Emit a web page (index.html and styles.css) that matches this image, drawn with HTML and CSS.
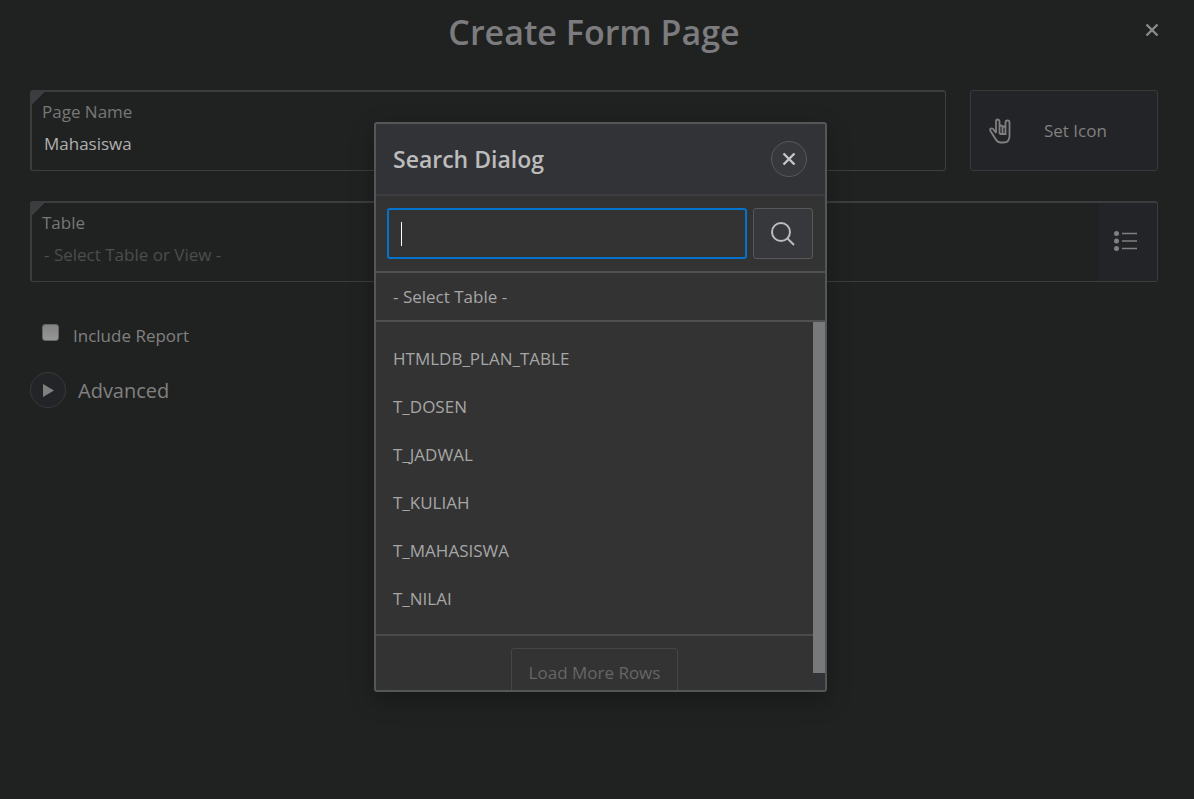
FILE: index.html
```html
<!DOCTYPE html>
<html lang="en">
<head>
<meta charset="utf-8">
<meta name="viewport" content="width=device-width, initial-scale=1">
<title>Create Form Page</title>
<link rel="stylesheet" href="styles.css">
</head>
<body>
<main class="page">
  <header class="page-header">
    <h1 class="page-title">Create Form Page</h1>
    <button class="page-close" type="button" aria-label="Close">
      <svg width="16" height="16" viewBox="0 0 16 16"><path d="M2.500 2.500 13.500 13.500M13.500 2.500 2.500 13.500"/></svg>
    </button>
  </header>
  <form class="form">
    <div class="form-row">
      <div class="field required">
        <label class="field-label" for="page-name">Page Name</label>
        <input class="field-input strong" id="page-name" type="text" value="Mahasiswa">
      </div>
      <button class="set-icon" type="button">
        <svg width="22" height="26" viewBox="0 0 22 26"><path d="M7 15V3Q7 1.500 8.500 1.500T10.500 3V8M10.500 16V9Q10.500 7.500 12 7.500T13.500 9V16M13.500 16V10Q13.500 8.500 15 8.500T16.500 10V16M10.500 16H16.500V4.500Q16.500 2.500 18.500 2.500T20.500 4.500V18Q20.500 24.500 14.500 24.500H12Q8.500 24.500 6.500 21L1.500 13Q.5 11 2 10.500T5 12L7 15"/></svg>
        <span class="set-icon-text">Set Icon</span>
      </button>
    </div>
    <div class="field with-button required">
      <div class="field-body">
        <label class="field-label" for="table-name">Table</label>
        <input class="field-input" id="table-name" type="text" placeholder="- Select Table or View -">
      </div>
      <button class="list-button" type="button" aria-label="Choose table">
        <svg width="24" height="20" viewBox="0 0 24 20"><g class="dots"><circle cx="2.500" cy="2.500" r="2.500"/><circle cx="2.500" cy="10" r="2.500"/><circle cx="2.500" cy="17.500" r="2.500"/></g><path d="M8 2.500H23M8 10H23M8 17.500H23"/></svg>
      </button>
    </div>
    <div class="check-row">
      <input class="check" id="include-report" type="checkbox">
      <label class="check-label" for="include-report">Include Report</label>
    </div>
    <button class="advanced" type="button">
      <span class="advanced-icon"><svg width="11" height="13" viewBox="0 0 11 13"><path d="M0 0 11 6.500 0 13Z"/></svg></span>
      <span class="advanced-text">Advanced</span>
    </button>
  </form>
</main>
<div class="overlay">
  <section class="dialog" role="dialog" aria-labelledby="dialog-title">
    <header class="dialog-header">
      <h2 class="dialog-title" id="dialog-title">Search Dialog</h2>
      <button class="dialog-close" type="button" aria-label="Close dialog">
        <svg width="16" height="16" viewBox="0 0 16 16"><path d="M2.500 2.500 13.500 13.500M13.500 2.500 2.500 13.500"/></svg>
      </button>
    </header>
    <div class="search">
      <div class="search-box">
        <input class="search-input" type="text" aria-label="Search">
        <span class="caret"></span>
      </div>
      <button class="search-button" type="button" aria-label="Search">
        <svg width="24" height="24" viewBox="0 0 24 24"><circle cx="10" cy="10" r="9"/><path d="M16.500 16.500 23 23"/></svg>
      </button>
    </div>
    <button class="select-none" type="button">- Select Table -</button>
    <div class="results">
      <div class="results-body">
        <ul class="options">
          <li><button class="option" type="button">HTMLDB_PLAN_TABLE</button></li>
          <li><button class="option" type="button">T_DOSEN</button></li>
          <li><button class="option" type="button">T_JADWAL</button></li>
          <li><button class="option" type="button">T_KULIAH</button></li>
          <li><button class="option" type="button">T_MAHASISWA</button></li>
          <li><button class="option" type="button">T_NILAI</button></li>
        </ul>
        <div class="more"><button class="more-button" type="button" disabled>Load More Rows</button></div>
      </div>
      <div class="scrollbar"><div class="thumb"></div></div>
    </div>
  </section>
</div>
</body>
</html>
```
FILE: styles.css
```css
* { box-sizing: border-box; }
body {
  margin: 0;
  min-height: 100vh;
  background: #202221;
  color: #808080;
  font: 17px/24px "Open Sans", "Noto Sans", sans-serif;
}
button, input { font: inherit; color: inherit; margin: 0; }
button { cursor: pointer; padding: 0; border: 0; background: none; }
input { outline: 0; }
svg { display: block; fill: none; stroke: currentColor; stroke-width: 2; }

.page-header {
  display: grid;
  grid-template-columns: 44px 1fr 44px;
  align-items: center;
  height: 66px;
  padding: 0 20px 0 14px;
}
.page-title {
  grid-column: 2;
  margin: 0;
  padding-bottom: 2px;
  text-align: center;
  font-size: 34px;
  line-height: 48px;
  font-weight: 600;
  color: #7c7c7e;
}
.page-close { display: grid; place-items: center; height: 44px; padding-bottom: 6px; color: #8a8a8c; }
.page-close svg, .dialog-close svg { stroke-width: 2.4; }

.form { padding: 24px 36px 0 30px; }
.form-row {
  display: grid;
  grid-template-columns: 1fr 188px;
  gap: 24px;
  margin-bottom: 30px;
}
.field {
  display: flex;
  flex-direction: column;
  height: 81px;
  padding: 8px 0 0 10px;
  border: 1px solid #3c3d3f;
  border-width: 2px 1px 1px 2px;
  border-radius: 3px;
}
.required { background: linear-gradient(135deg, #3c3d40 9px, transparent 9px) no-repeat; }
.field-label { align-self: flex-start; color: #777; }
.field-input {
  width: 100%;
  height: 32px;
  margin-top: 3px;
  padding: 0 2px;
  border: 0;
  background: transparent;
}
.field-input::placeholder { color: #4c4d4d; opacity: 1; }
.strong { color: #b0b0b0; }
.with-button { flex-direction: row; }
.field.with-button { padding: 0; }
.field-body { display: flex; flex: 1; flex-direction: column; padding: 8px 0 0 10px; }
.list-button { display: grid; place-items: center; width: 58px; padding: 0 4px 2px 0; background: #232427; }
.dots { fill: currentColor; stroke: none; }
.list-button path { stroke-width: 1.5; }
.set-icon {
  display: flex;
  align-items: center;
  gap: 33px;
  padding-left: 18px;
  border: 1px solid #38393b;
  border-radius: 3px;
  background: #232427;
}
.set-icon svg { stroke-width: 1.8; }

.check-row { display: flex; gap: 14px; padding: 42px 0 0 12px; }
.check {
  width: 17px;
  height: 17px;
  appearance: none;
  border: 1px solid #666;
  border-radius: 3px;
  background: linear-gradient(#848484, #969696);
}
.advanced { display: flex; align-items: center; gap: 12px; margin-top: 24px; }
.advanced-icon {
  display: grid;
  place-items: center;
  width: 36px;
  height: 36px;
  border: 1px solid #38393b;
  border-radius: 50%;
  background: #232427;
}
.advanced-icon svg { fill: currentColor; stroke: none; }
.advanced-text { padding-top: 2px; font-size: 20px; line-height: 28px; }

.overlay {
  position: absolute;
  inset: 0;
  display: flex;
  justify-content: center;
  align-items: flex-start;
  padding: 122px 0 0 7px;
}
.dialog {
  width: 453px;
  overflow: hidden;
  border: 2px solid #555658;
  border-radius: 3px;
  background: #333;
  color: #a6a6a6;
  box-shadow: 0 8px 24px rgba(0, 0, 0, 0.3);
}
.dialog-header {
  display: flex;
  align-items: center;
  justify-content: space-between;
  height: 72px;
  padding: 0 18px 0 17px;
  border-bottom: 2px solid #3d3d3f;
  background: #323336;
}
.dialog-title { margin: 0; font-size: 23px; line-height: 32px; font-weight: 600; color: #bcbcbd; }
.dialog-close {
  display: grid;
  place-items: center;
  width: 36px;
  height: 36px;
  border: 1px solid #58595b;
  border-radius: 50%;
  background: #37383b;
  color: #c6c6c7;
}
.search {
  display: flex;
  gap: 6px;
  padding: 12px 12px 12px 11px;
  border-bottom: 2px solid #505050;
}
.search-box { position: relative; flex: 1; }
.search-input {
  display: block;
  width: 100%;
  height: 51px;
  padding: 0 12px;
  border: 2px solid #0572ce;
  border-radius: 3px;
  background: #333;
}
.caret { position: absolute; left: 14px; top: 14px; width: 1px; height: 24px; background: #fff; }
.search-button {
  display: grid;
  place-items: center;
  width: 60px;
  border: 1px solid #57585a;
  border-radius: 3px;
  background: #37383b;
  color: #bcbcbd;
}
.select-none {
  display: block;
  width: 100%;
  height: 49px;
  padding: 1px 17px 0;
  border-bottom: 2px solid #505050;
  text-align: left;
}
.results { display: flex; height: 368px; overflow: hidden; }
.results-body { flex: 1; }
.options { list-style: none; margin: 0; padding: 12px 0; border-bottom: 2px solid #4b4b4c; }
.option { display: block; width: 100%; height: 48px; padding: 1px 17px 0; text-align: left; }
.more { display: flex; justify-content: center; padding-top: 12px; }
.more-button {
  height: 49px;
  padding: 0 17px;
  border: 1px solid #454647;
  border-radius: 3px;
  color: #666;
}
.scrollbar { width: 12px; background: #323336; }
.thumb { height: 351px; background: #78797b; }
```
